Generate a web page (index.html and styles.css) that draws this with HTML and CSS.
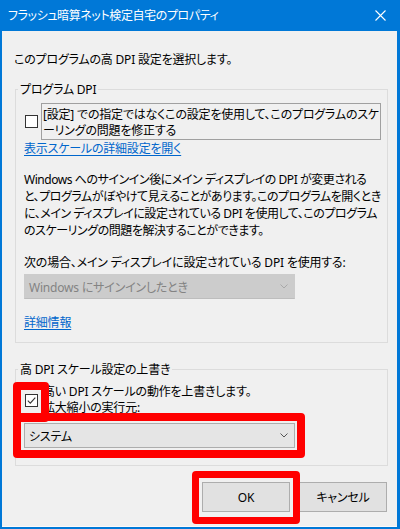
FILE: index.html
```html
<!DOCTYPE html>
<html lang="ja">
<head>
<meta charset="utf-8">
<title>フラッシュ暗算ネット検定自宅のプロパティ</title>
<link rel="stylesheet" href="styles.css">
</head>
<body>
<div class="frame">
  <div class="window">
    <div class="titlebar">
      <span class="title">フラッシュ暗算ネット検定自宅のプロパティ</span>
      <svg class="close" width="11" height="11" viewBox="0 0 11 11"><path d="M0.5 0.5 L10.5 10.5 M10.5 0.5 L0.5 10.5" stroke="#fff" stroke-width="1.1" fill="none"/></svg>
    </div>
    <div class="content">
      <p class="intro">このプログラムの高 DPI 設定を選択します。</p>
      <fieldset class="group group-program">
        <legend>プログラム DPI</legend>
        <div class="check-row">
          <span class="checkbox"></span>
          <span class="check-label focus">[設定] での指定ではなくこの設定を使用して、このプログラムのスケ<br>ーリングの問題を修正する</span>
        </div>
        <a class="link link-scale" href="#">表示スケールの詳細設定を開く</a>
        <p class="desc">Windows へのサインイン後にメイン ディスプレイの DPI が変更される<br>と、プログラムがぼやけて見えることがあります。このプログラムを開くとき<br>に、メイン ディスプレイに設定されている DPI を使用して、このプログラム<br>のスケーリングの問題を解決することができます。</p>
        <p class="caption">次の場合、メイン ディスプレイに設定されている DPI を使用する:</p>
        <div class="combo combo-disabled">
          <span>Windows にサインインしたとき</span>
          <svg class="chev" width="8" height="5" viewBox="0 0 8 5"><path d="M0.5 0.5 L4 4 L7.5 0.5" fill="none" stroke="#a8a8a8" stroke-width="1"/></svg>
        </div>
        <a class="link link-info" href="#">詳細情報</a>
      </fieldset>
      <fieldset class="group group-override">
        <legend>高 DPI スケール設定の上書き</legend>
        <div class="check-row">
          <span class="checkbox checked"><svg width="11" height="11" viewBox="0 0 11 11"><path d="M1.8 5.6 L4.3 8.1 L9.3 2.6" fill="none" stroke="#333" stroke-width="1.1"/></svg></span>
          <span class="check-label">高い DPI スケールの動作を上書きします。<br>拡大縮小の実行元:</span>
        </div>
        <div class="combo">
          <span>システム</span>
          <svg class="chev" width="8" height="5" viewBox="0 0 8 5"><path d="M0.5 0.5 L4 4 L7.5 0.5" fill="none" stroke="#555" stroke-width="1"/></svg>
        </div>
      </fieldset>
      <div class="buttons">
        <button class="btn" type="button">OK</button>
        <button class="btn" type="button">キャンセル</button>
      </div>
    </div>
  </div>
  <div class="mark mark-check"></div>
  <div class="mark mark-combo"></div>
  <div class="mark mark-ok"></div>
</div>
</body>
</html>
```
FILE: styles.css
```css
html, body {
  margin: 0;
  padding: 0;
  background: #f0f0f0;
}

body {
  font-family: "Noto Sans", "Noto Sans CJK JP", sans-serif;
  font-size: 12px;
  color: #000;
  font-feature-settings: "palt";
  letter-spacing: -0.2px;
}

.frame {
  position: relative;
  width: 400px;
  height: 529px;
}

.window {
  box-sizing: border-box;
  width: 400px;
  height: 529px;
  border-left: 2px solid #0078d7;
  border-right: 3px solid #0078d7;
  border-bottom: 2px solid #0078d7;
  display: flex;
  flex-direction: column;
  background: #f0f0f0;
}

.titlebar {
  height: 31px;
  flex: none;
  background: #0078d7;
  color: #fff;
  display: flex;
  align-items: center;
  justify-content: space-between;
  padding-left: 6px;
}

.title {
  font-size: 12px;
  line-height: 17px;
  letter-spacing: -0.4px;
}

.close {
  margin-right: 11px;
  display: block;
}

.content {
  flex: 1;
  padding: 20px 9px 0 13px;
  border-bottom: 1px solid #fafafa;
}

p {
  margin: 0;
}

.intro {
  line-height: 17px;
  margin-left: -1px;
}

.group {
  margin: 0;
  min-width: 0;
  border: 1px solid #dcdcdc;
  padding: 0 8px;
}

.group legend {
  line-height: 17px;
  padding: 0 2px;
  margin-left: -6px;
}

.group-program {
  margin-top: 13px;
  padding-top: 5px;
  padding-bottom: 11px;
}

.group-override {
  margin-top: 18px;
  padding-top: 2px;
  padding-bottom: 17px;
}

.check-row {
  display: flex;
  align-items: center;
  gap: 3px;
}

.checkbox {
  box-sizing: border-box;
  width: 13px;
  height: 13px;
  margin-left: 1px;
  border: 1px solid #333;
  background: #fff;
  flex: none;
  display: flex;
}

.checkbox.checked {
  margin-top: 3px;
}

.check-label {
  flex: 1;
  line-height: 16px;
  padding: 3px 1px 0;
  border: 1px solid transparent;
  white-space: nowrap;
}

.check-label.focus {
  border-color: #a0a0a0;
}

.link {
  display: block;
  width: max-content;
  color: #0066cc;
  text-decoration: underline;
  text-underline-offset: 2px;
  line-height: 17px;
}

.desc {
  margin-top: 14px;
  line-height: 17px;
  white-space: nowrap;
  letter-spacing: -0.45px;
}

.caption {
  margin-top: 15px;
  line-height: 17px;
}

.combo {
  box-sizing: border-box;
  width: 271px;
  height: 25px;
  margin-top: 3px;
  border: 1px solid #adadad;
  background: #e5e5e5;
  display: flex;
  align-items: center;
  justify-content: space-between;
  padding: 0 6px 0 4px;
}

.combo-disabled {
  background: #cccccc;
  border-color: #cccccc;
  border-bottom-color: #bdbdbd;
  color: #838383;
}

.chev {
  display: block;
}

.link-info {
  margin-top: 15px;
}

.group-override .combo {
  margin-top: 6px;
}

.buttons {
  display: flex;
  justify-content: flex-end;
  gap: 9px;
  margin-top: 16px;
  padding-right: 1px;
}

.btn {
  width: 88px;
  height: 30px;
  background: #e1e1e1;
  border: 1px solid #adadad;
  font-family: inherit;
  font-size: 12px;
  letter-spacing: inherit;
  color: #000;
  padding: 0;
  font-feature-settings: "palt";
}

.mark {
  position: absolute;
  box-sizing: border-box;
  border: 8px solid #ff0000;
  border-radius: 4px;
}

.mark-check {
  left: 13px;
  top: 382px;
  width: 36px;
  height: 40px;
}

.mark-combo {
  left: 13px;
  top: 413px;
  width: 292px;
  height: 45px;
}

.mark-ok {
  left: 192px;
  top: 471px;
  width: 108px;
  height: 53px;
  border-width: 7px;
}
```
